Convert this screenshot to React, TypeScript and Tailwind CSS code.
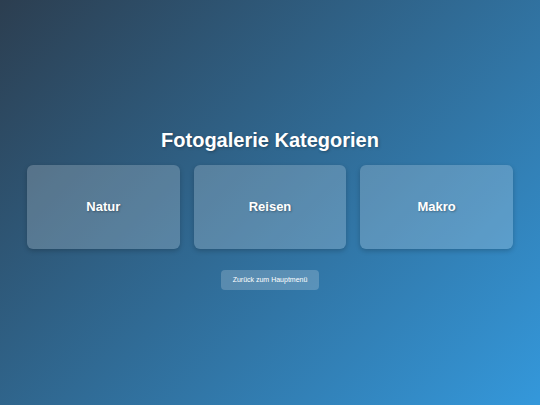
export default function App() {
  const categories = ["Natur", "Reisen", "Makro"];

  return (
    <div
      className="min-h-screen w-full flex flex-col items-center justify-center bg-[linear-gradient(135deg,#2c3e50,#3498db)] text-white px-[27px] pt-[13px]"
      style={{ fontFamily: '"Liberation Sans", Arial, sans-serif' }}
    >
      <h1 className="text-[20px] leading-[24px] font-bold mb-[13px] [text-shadow:1px_1px_3px_rgba(0,0,0,0.3)]">
        Fotogalerie Kategorien
      </h1>

      <div className="grid grid-cols-3 gap-[14px] w-full">
        {categories.map((name) => (
          <div
            key={name}
            className="h-[84px] rounded-[6px] bg-white/20 shadow-[0_2px_5px_rgba(0,0,0,0.2)] flex items-center justify-center"
          >
            <span className="text-[13px] font-bold [text-shadow:1px_1px_2px_rgba(0,0,0,0.3)]">
              {name}
            </span>
          </div>
        ))}
      </div>

      <button className="mt-[21px] w-[98px] h-[20px] rounded-[4px] bg-white/20 text-[7px] text-white">
        Zurück zum Hauptmenü
      </button>
    </div>
  );
}
